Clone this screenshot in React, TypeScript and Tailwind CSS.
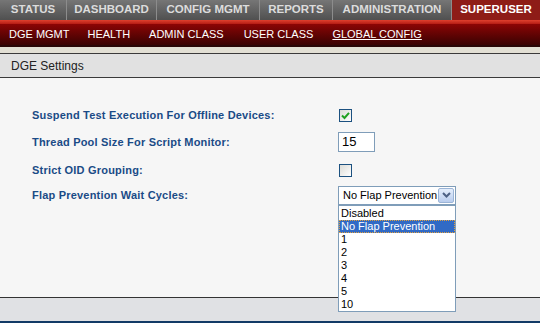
import React from "react";

const tabs = [
  { label: "STATUS", w: "w-[67px]" },
  { label: "DASHBOARD", w: "w-[90px]" },
  { label: "CONFIG MGMT", w: "w-[103px]" },
  { label: "REPORTS", w: "w-[73px]" },
  { label: "ADMINISTRATION", w: "w-[119px]" },
];

const options = ["Disabled", "No Flap Prevention", "1", "2", "3", "4", "5", "10"];

function Check({ checked }: { checked: boolean }) {
  return (
    <div className="w-[13px] h-[13px] border border-[#1c5180] bg-gradient-to-br from-[#dcdcd7] to-[#ffffff] flex items-center justify-center">
      {checked && (
        <svg width="9" height="9" viewBox="0 0 9 9">
          <path d="M1 4.5 L3.5 7 L8 1.8" stroke="#21a121" strokeWidth="2" fill="none" />
        </svg>
      )}
    </div>
  );
}

export default function App() {
  return (
    <div className="w-[540px] h-[323px] overflow-hidden flex flex-col bg-[#f6f6f6]" style={{ fontFamily: "'Liberation Sans', Arial, sans-serif" }}>
      {/* top nav */}
      <div className="h-[20px] flex bg-gradient-to-b from-[#767676] to-[#505050]">
        {tabs.map((t) => (
          <div key={t.label} className={`${t.w} h-full flex items-center justify-center border-r border-[#8c8c8c] text-[11.5px] font-bold text-[#dcdcdc]`}>
            {t.label}
          </div>
        ))}
        <div className="flex-1 h-full flex items-center justify-center bg-[#8e1c17] text-[11.5px] font-bold text-white">
          SUPERUSER
        </div>
      </div>
      <div className="h-[4px] bg-gradient-to-b from-[#e0402e] to-[#b41c14]" />
      {/* sub nav */}
      <div className="h-[21px] flex items-center bg-gradient-to-b from-[#8c0505] to-[#3a0202] text-[11px] text-white">
        <span className="ml-[9px]">DGE MGMT</span>
        <span className="ml-[18px]">HEALTH</span>
        <span className="ml-[19px]">ADMIN CLASS</span>
        <span className="ml-[20px]">USER CLASS</span>
        <span className="ml-[19px] underline">GLOBAL CONFIG</span>
      </div>
      <div className="h-[2px] bg-[#2a0606]" />
      <div className="h-[6px] bg-[#e2dfd4] border-b border-[#3a3a3a] box-content" />
      {/* header */}
      <div className="h-[23px] bg-[#e1e1e1] border-b border-[#3a3a3a] box-content flex items-center pl-[11px] text-[12px] text-[#222]">
        DGE Settings
      </div>
      {/* content */}
      <div className="flex-1 flex flex-col pt-[27px] pl-[32px] text-[11px] font-bold tracking-[0.2px] text-[#1a4b86]">
        <div className="h-[20px] flex items-center">
          <div className="w-[306px]">Suspend Test Execution For Offline Devices:</div>
          <div className="ml-[1px]"><Check checked /></div>
        </div>
        <div className="h-[20px] mt-[7px] flex items-center">
          <div className="w-[306px]">Thread Pool Size For Script Monitor:</div>
          <div className="w-[37px] h-[20px] border border-[#7f9db9] bg-white flex items-center pl-[3px] text-[13px] font-normal tracking-normal text-black">15</div>
        </div>
        <div className="h-[20px] mt-[8px] flex items-center">
          <div className="w-[306px]">Strict OID Grouping:</div>
          <div className="ml-[1px]"><Check checked={false} /></div>
        </div>
        <div className="h-[20px] mt-[5px] flex items-center">
          <div className="w-[306px]">Flap Prevention Wait Cycles:</div>
          <div className="relative w-[118px] h-[19px] border border-[#7f9db9] bg-white flex items-center font-normal tracking-normal text-black">
            <span className="pl-[4px] text-[11px] flex-1">No Flap Prevention</span>
            <div className="w-[16px] h-[15px] mr-[1px] rounded-[2px] border border-[#9bb4d6] bg-gradient-to-b from-[#e4eefc] to-[#b9cdee] flex items-center justify-center">
              <svg width="9" height="6" viewBox="0 0 9 6">
                <path d="M1 1 L4.5 4.5 L8 1" stroke="#4d6185" strokeWidth="2" fill="none" />
              </svg>
            </div>
            <div className="absolute left-[-1px] top-[18px] w-[118px] border border-[#7f9db9] bg-white z-10 pt-[1px]">
              {options.map((o) => (
                <div
                  key={o}
                  className={`h-[13px] leading-[13px] pl-[2px] text-[11px] ${o === "No Flap Prevention" ? "bg-[#316ac5] text-white outline-1 outline-dotted outline-[#e0a040] -outline-offset-1" : "text-black"}`}
                >
                  {o}
                </div>
              ))}
            </div>
          </div>
        </div>
      </div>
      <div className="h-[1px] bg-[#333]" />
      <div className="h-[23px] bg-[#e0e1e4]" />
      <div className="h-[2px] bg-[#123a66]" />
    </div>
  );
}
